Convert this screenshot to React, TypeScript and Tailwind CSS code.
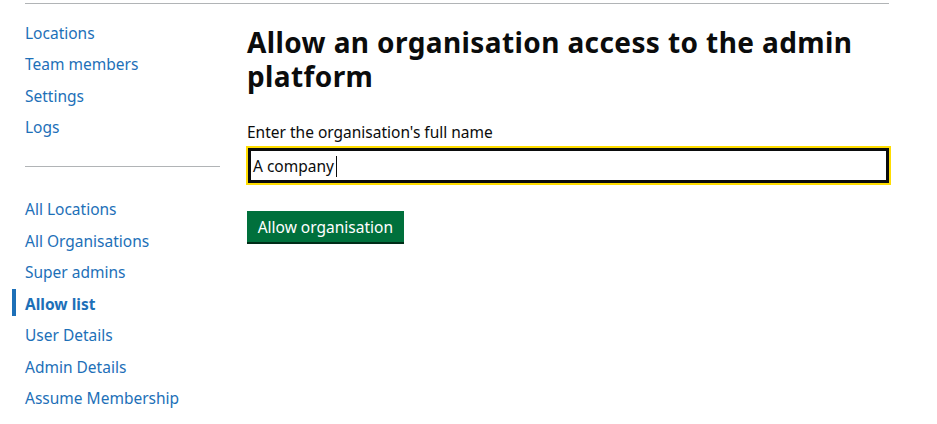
const accountLinks = ["Locations", "Team members", "Settings", "Logs"];
const adminLinks = [
  "All Locations",
  "All Organisations",
  "Super admins",
  "Allow list",
  "User Details",
  "Admin Details",
  "Assume Membership",
];
const activeLink = "Allow list";

function NavItem({ label, rowClass }: { label: string; rowClass: string }) {
  const active = label === activeLink;
  return (
    <li className={`relative ${rowClass}`}>
      {active && <span className="absolute left-[-13px] top-0 h-[27px] w-[4px] bg-[#1d70b8]" />}
      <a
        href="#"
        className={`text-[#1d70b8] no-underline ${active ? "font-bold" : "font-normal"}`}
      >
        {label}
      </a>
    </li>
  );
}

export default function App() {
  return (
    <div className="min-h-screen bg-white font-['Noto_Sans',sans-serif] text-[15.5px] text-[#0b0c0c]">
      <div className="ml-[25px] mr-[48px] mt-[3px] flex border-t border-[#b1b4b6]">
        <nav className="w-[195px] shrink-0 pt-[14px]">
          <ul>
            {accountLinks.map((l) => (
              <NavItem key={l} label={l} rowClass="h-[31.33px] leading-[31.33px]" />
            ))}
          </ul>
          <div className="mt-[23px] h-px bg-[#b1b4b6]" />
          <ul className="mt-[27px]">
            {adminLinks.map((l) => (
              <NavItem key={l} label={l} rowClass="h-[31.5px] leading-[31.5px]" />
            ))}
          </ul>
        </nav>

        <main className="ml-[27px] min-w-0 flex-1 pt-[21px]">
          <h1 className="text-[28px] font-bold leading-[34px] tracking-[0.4px]">
            Allow an organisation access to the admin platform
          </h1>

          <form className="mt-[29px]" onSubmit={(e) => e.preventDefault()}>
            <label htmlFor="org-name" className="block leading-[20px]">
              Enter the organisation's full name
            </label>
            <div
              id="org-name"
              className="ml-px mt-[6px] flex h-[35px] items-center border-[3px] border-[#0b0c0c] bg-white pl-[2px] pt-[2px] outline-2 outline-[#ffdd00]"
            >
              <span className="whitespace-nowrap">A company</span>
              <span className="ml-[2px] h-[21px] w-px bg-[#0b0c0c]" />
            </div>

            <button
              type="submit"
              className="mt-[28px] h-[31px] bg-[#00703c] px-[10.7px] pt-px leading-[31px] text-white shadow-[0_2px_0_#002d18]"
            >
              Allow organisation
            </button>
          </form>
        </main>
      </div>
    </div>
  );
}
